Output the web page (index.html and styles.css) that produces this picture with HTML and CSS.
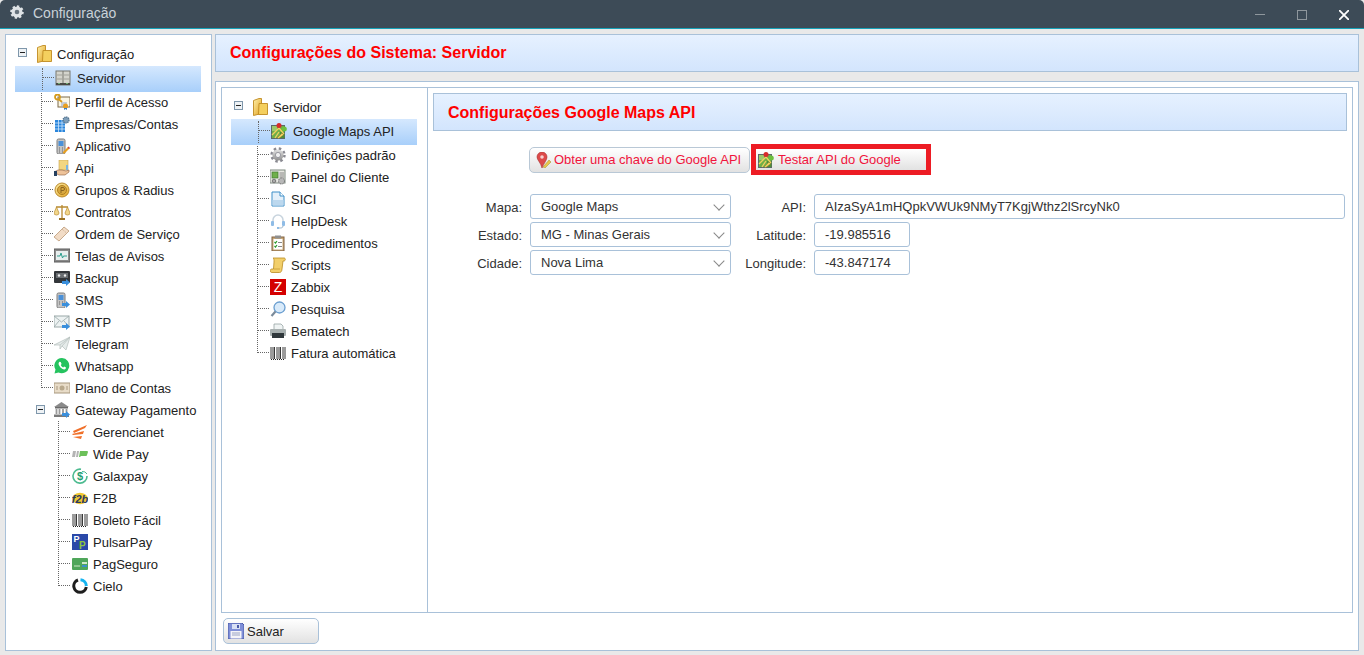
FILE: index.html
```html
<!DOCTYPE html>
<html lang="pt-BR">
<head>
  <meta charset="UTF-8" />
  <title>Configuração</title>
  <link rel="stylesheet" href="styles.css">
</head>
<body>
  <svg class="sprites" width="0" height="0" aria-hidden="true">
    <defs>
      <linearGradient id="g-gold" x1="0" y1="0" x2="1" y2="1"><stop offset="0" stop-color="#fff0a8"/><stop offset="1" stop-color="#e0a020"/></linearGradient>
      <linearGradient id="g-grey" x1="0" y1="0" x2="0" y2="1"><stop offset="0" stop-color="#e4e4e4"/><stop offset="1" stop-color="#8e8e8e"/></linearGradient>
      <symbol id="i-arrow" viewBox="0 0 16 16"><path d="M8 11h4V9l4 3.500-4 3.500v-2H8z" fill="#3a8fdc"/></symbol>
      <symbol id="i-folder" viewBox="0 0 15 18"><path d="M.5 2.500 6 .5h2.500v15l-8 2z" fill="url(#g-gold)" stroke="#c08a20" stroke-width=".9"/><path d="M6 5.500h8.500v11H5.500z" fill="#f4cf5e" stroke="#c08a20" stroke-width=".9"/></symbol>
      <symbol id="i-server" viewBox="0 0 16 16"><rect x="1" y="1" width="14" height="14" fill="#d4d4cc" stroke="#77776f"/><path d="M8 1v14" stroke="#77776f"/><path d="M2 5h5M9 5h5M2 9h5M9 9h5" stroke="#a0a098"/><path d="M1 14h14" stroke="#4a4a46" stroke-width="2"/><path d="M3 13.500h2M11 13.500h2" stroke="#6fb06f"/></symbol>
      <symbol id="i-cert" viewBox="0 0 16 16"><rect x="4" y="3" width="12" height="10" fill="#fbf6e4" stroke="#7c6a4a"/><path d="M7 9h6M7 11h4" stroke="#8ba2c8"/><circle cx="3.500" cy="3" r="2.500" fill="none" stroke="#d49a1c" stroke-width="1.800"/><path d="M4.500 5 8 8" stroke="#d49a1c" stroke-width="1.800"/><circle cx="11.500" cy="12" r="2.500" fill="#e8a020"/><path d="M10 14v2l1.500-1 1.500 1v-2" fill="#3b7fc4"/></symbol>
      <symbol id="i-building" viewBox="0 0 16 16"><rect x="1" y="4" width="10" height="12" fill="#2a86dc"/><path d="M1 7h10M1 10h10M1 13h10M4.500 4v12M8 4v12" stroke="#cfe6fb" stroke-width=".8"/><circle cx="12" cy="4" r="3" fill="#7f9fba" stroke="#50708c" stroke-width="1.300" stroke-dasharray="1.200 .8"/></symbol>
      <symbol id="i-phone" viewBox="0 0 16 16"><rect x="3" y="1" width="8" height="15" rx="1.500" fill="#c4c4c4" stroke="#7c7c7c"/><rect x="4.500" y="3" width="5" height="5" fill="#4a90d8"/><path d="M5 10h1M8 10h1M5 12h1M8 12h1M5 14h1M8 14h1" stroke="#666"/><path d="M9 14l5-5 1.500 1.500-5 5H9z" fill="#e8a020"/><path d="m13.500 9.500 1-1 1.500 1.500-1 1z" fill="#d43a3a"/></symbol>
      <symbol id="i-phone-send" viewBox="0 0 16 16"><rect x="3" y="1" width="8" height="15" rx="1.500" fill="#c4c4c4" stroke="#7c7c7c"/><rect x="4.500" y="3" width="5" height="5" fill="#4a90d8"/><path d="M5 10h1M8 10h1M5 12h1M8 12h1" stroke="#666"/><use href="#i-arrow" width="16" height="16"/></symbol>
      <symbol id="i-api" viewBox="0 0 16 16"><path d="M5 0h9v10H5z" fill="#f3d680" stroke="#c9a24a" stroke-width=".6"/><path d="M0 12l4-2h4l4 1 3-1v2l-4 3H5l-2-1H0z" fill="#eec39a" stroke="#8c5a3c" stroke-width=".6"/><path d="M0 11h3v5H0z" fill="#26405f"/><rect x="12" y="5" width="2" height="5" fill="#7ab4e0"/></symbol>
      <symbol id="i-coin" viewBox="0 0 16 16"><circle cx="8" cy="8" r="7" fill="url(#g-gold)" stroke="#b98a30"/><circle cx="8" cy="8" r="4.500" fill="#d8a840" stroke="#b07f20"/><path d="M7 11V5.500h2a1.500 1.500 0 0 1 0 3H7" fill="none" stroke="#8a6420"/></symbol>
      <symbol id="i-scales" viewBox="0 0 16 16"><path d="M8 1v13M2 3h12" stroke="#b88a30" stroke-width="1.300"/><path d="M5 15h6" stroke="#9b7224" stroke-width="2"/><path d="M0 9l2.500-6L5 9a2.500 2 0 0 1-5 0zM11 9l2.500-6L16 9a2.500 2 0 0 1-5 0z" fill="#f2d68a" stroke="#b88a30" stroke-width=".7"/></symbol>
      <symbol id="i-ticket" viewBox="0 0 16 16"><path d="M0 11 10 1l5 4L5 15z" fill="#f2dcc6" stroke="#c8aa8c"/><path d="m8 3 4.500 4" stroke="#c8aa8c" stroke-dasharray="1 1"/></symbol>
      <symbol id="i-monitor" viewBox="0 0 16 16"><rect x="0" y="1" width="16" height="13" fill="#8a8a8a" stroke="#5a5a5a"/><rect x="2" y="3" width="12" height="9" fill="#e8eeee"/><path d="M3 8h3l1-3 1.500 5 1-2H13" fill="none" stroke="#2f9f8f"/></symbol>
      <symbol id="i-backup" viewBox="0 0 16 16"><rect x="0" y="1" width="16" height="12" rx="1" fill="#33363a"/><rect x="2" y="3" width="12" height="5" fill="#6a6e72"/><circle cx="5" cy="5.500" r="1.200" fill="#eee"/><circle cx="11" cy="5.500" r="1.200" fill="#eee"/><use href="#i-arrow" width="16" height="16"/></symbol>
      <symbol id="i-mail" viewBox="0 0 16 16"><rect x="0" y="2" width="15" height="11" fill="#edf2f2" stroke="#9aa8a8"/><path d="m0 2 7.500 6L15 2M0 13l5-6M15 13l-5-6" fill="none" stroke="#9aa8a8" stroke-width=".8"/><use href="#i-arrow" width="16" height="16"/></symbol>
      <symbol id="i-plane" viewBox="0 0 16 16"><path d="M0 9 16 1l-4 13-4-4-2 3V9z" fill="#e6eceb" stroke="#b4bebc" stroke-width=".7"/><path d="M6 9 16 1 8 10" fill="none" stroke="#b4bebc" stroke-width=".7"/></symbol>
      <symbol id="i-whatsapp" viewBox="0 0 16 16"><path d="M8 0a7.600 7.600 0 0 0-6.500 11.600L.5 15.500l4-1A7.600 7.600 0 1 0 8 0z" fill="#25c35f"/><path d="M5.500 3.800c-1 .8-1.200 2-.5 3.500s2 3 3.600 3.800c1.400.6 2.600.4 3.200-.6l.2-1-1.900-1-.9.9c-1-.4-2-1.400-2.400-2.400l.8-.9-.9-2z" fill="#fff"/></symbol>
      <symbol id="i-money" viewBox="0 0 16 16"><rect x="0" y="3" width="16" height="10" fill="#e8dcc8" stroke="#a8987e"/><circle cx="8" cy="8" r="2.500" fill="#b8a88c"/><path d="M3 6v4M13 6v4" stroke="#a8987e"/></symbol>
      <symbol id="i-bank" viewBox="0 0 16 16"><path d="M0 5 7.500 0 15 5z" fill="#8a8a8a"/><path d="M1 5h13v1.500H1z" fill="#6a6a6a"/><path d="M2.500 7v5M5.500 7v5M9 7v5M12.500 7v5" stroke="#9a9a9a" stroke-width="1.800"/><path d="M0 12.500h15V15H0z" fill="#7a7a7a"/><use href="#i-arrow" width="16" height="16"/></symbol>
      <symbol id="i-gerencianet" viewBox="0 0 16 16"><path d="M1 7 15 1l-2 3L2 9zM0 10l12-3-1 3-10 1zM1 13l9-1-1 3z" fill="#f0702a"/></symbol>
      <symbol id="i-widepay" viewBox="0 0 16 16"><path d="M1 5h3L3 11H0zM5 5h2L6 11H4z" fill="#b4b4b4"/><path d="M8 5h7a1 1 0 0 1 1 1l-1 3a1 1 0 0 1-1 1H9l-1 1H7z" fill="#6cc05a"/></symbol>
      <symbol id="i-galaxpay" viewBox="0 0 16 16"><path d="M9 1.200A7 7 0 1 0 15 8" fill="none" stroke="#4dbb90" stroke-width="1.600"/><path d="M10 3.500A5 5 0 0 1 15 6" fill="none" stroke="#4dbb90"/><text x="8" y="12" text-anchor="middle" font-family="Liberation Sans" font-size="11" font-weight="700" fill="#1f9f70">$</text></symbol>
      <symbol id="i-f2b" viewBox="0 0 16 16"><ellipse cx="8" cy="8.500" rx="7.800" ry="5.800" fill="#f2c832"/><text x="8" y="13" text-anchor="middle" font-family="Liberation Sans" font-size="11" font-weight="700" font-style="italic" fill="#2c3a60">f2b</text></symbol>
      <symbol id="i-barcode" viewBox="0 0 16 16"><path d="M1 2v12M3 2v12M4.500 2v12M7 2v12M9 2v12M10.500 2v12M13 2v12M15 2v12" stroke="#222" stroke-width=".9"/><path d="M1 14.500h14" stroke="#222" stroke-dasharray="1 1"/></symbol>
      <symbol id="i-pulsar" viewBox="0 0 16 16"><rect width="16" height="16" fill="#2a48a8"/><text x="1.500" y="8" font-family="Liberation Sans" font-size="9" font-weight="700" fill="#fff">P</text><text x="7" y="15" font-family="Liberation Sans" font-size="10" font-weight="700" fill="#8cc63f">P</text></symbol>
      <symbol id="i-pagseguro" viewBox="0 0 16 16"><rect y="2" width="16" height="12" rx="1" fill="#4fa65a"/><path d="M10 6h5v2h-5z" fill="#cfe8c8"/><path d="M10 9h5v2h-5z" fill="#3b8fc8"/><path d="M2 10h6" stroke="#cfe8c8"/></symbol>
      <symbol id="i-cielo" viewBox="0 0 16 16"><path d="M8.500 1.700A6.300 6.300 0 0 1 14.300 8" fill="none" stroke="#14b4f0" stroke-width="3"/><path d="M14.300 9A6.300 6.300 0 1 1 6 2" fill="none" stroke="#1e1e1e" stroke-width="3"/></symbol>
      <symbol id="i-map" viewBox="0 0 16 16"><rect x="0.500" y="2.500" width="13" height="13" fill="#6fae48" stroke="#5a6a6a"/><path d="M1 3h5v5H1z" fill="#9cc86a"/><path d="M9 9h4.500v6H9z" fill="#4f8f3a"/><path d="M1 12 8 5l5 6M4 15l4-6" stroke="#f2d060" stroke-width="1.300" fill="none"/><circle cx="8" cy="2.600" r="2.500" fill="#d82a2a"/><circle cx="13.300" cy="6" r="2.500" fill="#6cc040"/><path d="M6 15l5-5 1.800 1.800-5 3.700z" fill="#f0d060" stroke="#806a20" stroke-width=".4"/></symbol>
      <symbol id="i-gear" viewBox="0 0 16 16"><circle cx="8" cy="8" r="6.300" fill="none" stroke="#8a8a92" stroke-width="2.800" stroke-dasharray="2.400 2.550"/><circle cx="8" cy="8" r="5.600" fill="url(#g-grey)"/><circle cx="8" cy="8" r="2.600" fill="#f0f0f0" stroke="#80808a" stroke-width=".7"/></symbol>
      <symbol id="i-panel" viewBox="0 0 16 16"><rect x="0" y="1" width="15" height="13" fill="#e8e8e2" stroke="#7f8a80"/><rect x="2" y="3" width="6" height="6" fill="#6fb04a" stroke="#3f7a30" stroke-width=".7"/><path d="M9.500 4H14M9.500 6H14M9.500 8H14" stroke="#888"/><circle cx="4" cy="12" r="1.800" fill="#aaa" stroke="#777"/><circle cx="11.500" cy="12" r="3" fill="#b8b8b8" stroke="#666" stroke-dasharray="1 .7"/></symbol>
      <symbol id="i-doc" viewBox="0 0 16 16"><path d="M2 1h8l4 4v10H2z" fill="#e4f0fa" stroke="#3f8fc8"/><path d="M10 1v4h4" fill="#fff" stroke="#3f8fc8"/><path d="M2.500 9h11v5.500h-11z" fill="#bcd8ee"/></symbol>
      <symbol id="i-headset" viewBox="0 0 16 16"><path d="M3 9V7a5 5 0 0 1 10 0v2" fill="none" stroke="#c8d4de" stroke-width="1.500"/><rect x="1" y="8" width="3" height="5" rx="1" fill="#8fbce6"/><rect x="12" y="8" width="3" height="5" rx="1" fill="#8fbce6"/><path d="M13 13c0 2-2 2-4 2" fill="none" stroke="#9ab4c8"/><circle cx="8" cy="15" r="1" fill="#6aa6dc"/></symbol>
      <symbol id="i-clip" viewBox="0 0 16 16"><rect x="2" y="2" width="12" height="14" fill="#c8a878" stroke="#806040"/><rect x="3.500" y="4" width="9" height="10.500" fill="#fff"/><rect x="5" y="0.500" width="6" height="3" fill="#909090"/><path d="M4.500 7l1 1 1.500-2M4.500 11l1 1 1.500-2" fill="none" stroke="#2a9a2a" stroke-width="1.200"/><path d="M8 7.500h4M8 11.500h4" stroke="#888"/></symbol>
      <symbol id="i-scroll" viewBox="0 0 16 16"><path d="M3 1h11c2 0 1.500 3 0 3h-1l-1 8c0 2-1 3.500-2.500 3.500H2c-2.500 0-2.500-3.500 0-3.500h1.500L4 5C4 3 4 1.500 3 1z" fill="#f2cf6a" stroke="#b98a20" stroke-width=".8"/><path d="M4 12h6" stroke="#b98a20" stroke-width=".6"/></symbol>
      <symbol id="i-zabbix" viewBox="0 0 16 16"><rect width="16" height="16" fill="#d40000"/><text x="8" y="13" text-anchor="middle" font-family="Liberation Sans" font-size="14" fill="#fff">Z</text></symbol>
      <symbol id="i-search" viewBox="0 0 16 16"><circle cx="9.500" cy="6.500" r="5.500" fill="#d8eafa" stroke="#6a9ed0" stroke-width="1.300"/><path d="M5.500 10.500 1.500 15" stroke="#7a8a9a" stroke-width="2.200"/></symbol>
      <symbol id="i-printer" viewBox="0 0 16 16"><path d="M4 1h7l2 2v4H4z" fill="#f0f4f4" stroke="#8a9a9a" stroke-width=".7"/><rect x="0" y="6" width="16" height="7" rx="1" fill="#a8b0b0"/><rect x="2" y="10" width="12" height="5" fill="#30383c"/></symbol>
      <symbol id="i-pin" viewBox="0 0 16 16"><path d="M6 0a5 5 0 0 1 5 5c0 3-3 6-5 11-1-5-5-8-5-11a5 5 0 0 1 5-5z" fill="#dd4a4a" stroke="#a83030" stroke-width=".6"/><circle cx="6" cy="5" r="1.800" fill="#f8d0d0"/><path d="m7 15 6-7 2 2-6 6z" fill="#e8c84a" stroke="#a08a30" stroke-width=".5"/></symbol>
      <symbol id="i-floppy" viewBox="0 0 16 16"><path d="M0 0h14l2 2v14H0z" fill="#7f8fd8" stroke="#4a5aa8"/><rect x="4" y="1" width="8" height="5" fill="#d8e0f4"/><rect x="9" y="2" width="2" height="3" fill="#4a5aa8"/><rect x="2.500" y="8" width="11" height="7.500" fill="#f4f4f8"/><path d="M4 10h8M4 12h8" stroke="#9aa4c4"/></symbol>
    </defs>
  </svg>

  <div class="window">
    <div class="titlebar">
      <svg class="title-icon" viewBox="0 0 16 16"><circle cx="8" cy="8" r="5.500" fill="#dfe3e6" stroke="#dfe3e6" stroke-width="2.600" stroke-dasharray="2.200 2"/><circle cx="8" cy="8" r="5" fill="#dfe3e6"/><circle cx="8" cy="8" r="2.300" fill="#66727c"/></svg>
      <span class="title-text">Configuração</span>
      <div class="win-controls">
        <span class="win-btn"><i class="win-min"></i></span>
        <span class="win-btn"><i class="win-max"></i></span>
        <span class="win-btn"><svg class="win-close" viewBox="0 0 10 10"><path d="m0 0 10 10M10 0 0 10" stroke="#fff" stroke-width="1.800"/></svg></span>
      </div>
    </div>

    <div class="workspace">
      <aside class="panel sidebar">
        <div class="tree">
          <div class="node root"><i class="exp"></i><svg class="ico folder"><use href="#i-folder"/></svg><span>Configuração</span></div>
          <div class="branch">
            <div class="node selected"><i class="elbow"></i><svg class="ico"><use href="#i-server"/></svg><span>Servidor</span></div>
            <div class="node"><i class="elbow"></i><svg class="ico"><use href="#i-cert"/></svg><span>Perfil de Acesso</span></div>
            <div class="node"><i class="elbow"></i><svg class="ico"><use href="#i-building"/></svg><span>Empresas/Contas</span></div>
            <div class="node"><i class="elbow"></i><svg class="ico"><use href="#i-phone"/></svg><span>Aplicativo</span></div>
            <div class="node"><i class="elbow"></i><svg class="ico"><use href="#i-api"/></svg><span>Api</span></div>
            <div class="node"><i class="elbow"></i><svg class="ico"><use href="#i-coin"/></svg><span>Grupos &amp; Radius</span></div>
            <div class="node"><i class="elbow"></i><svg class="ico"><use href="#i-scales"/></svg><span>Contratos</span></div>
            <div class="node"><i class="elbow"></i><svg class="ico"><use href="#i-ticket"/></svg><span>Ordem de Serviço</span></div>
            <div class="node"><i class="elbow"></i><svg class="ico"><use href="#i-monitor"/></svg><span>Telas de Avisos</span></div>
            <div class="node"><i class="elbow"></i><svg class="ico"><use href="#i-backup"/></svg><span>Backup</span></div>
            <div class="node"><i class="elbow"></i><svg class="ico"><use href="#i-phone-send"/></svg><span>SMS</span></div>
            <div class="node"><i class="elbow"></i><svg class="ico"><use href="#i-mail"/></svg><span>SMTP</span></div>
            <div class="node"><i class="elbow"></i><svg class="ico"><use href="#i-plane"/></svg><span>Telegram</span></div>
            <div class="node"><i class="elbow"></i><svg class="ico"><use href="#i-whatsapp"/></svg><span>Whatsapp</span></div>
            <div class="node"><i class="elbow"></i><svg class="ico"><use href="#i-money"/></svg><span>Plano de Contas</span></div>
          </div>
          <div class="node parent"><i class="exp"></i><svg class="ico"><use href="#i-bank"/></svg><span>Gateway Pagamento</span></div>
          <div class="branch sub">
            <div class="node"><i class="elbow"></i><svg class="ico"><use href="#i-gerencianet"/></svg><span>Gerencianet</span></div>
            <div class="node"><i class="elbow"></i><svg class="ico"><use href="#i-widepay"/></svg><span>Wide Pay</span></div>
            <div class="node"><i class="elbow"></i><svg class="ico"><use href="#i-galaxpay"/></svg><span>Galaxpay</span></div>
            <div class="node"><i class="elbow"></i><svg class="ico"><use href="#i-f2b"/></svg><span>F2B</span></div>
            <div class="node"><i class="elbow"></i><svg class="ico"><use href="#i-barcode"/></svg><span>Boleto Fácil</span></div>
            <div class="node"><i class="elbow"></i><svg class="ico"><use href="#i-pulsar"/></svg><span>PulsarPay</span></div>
            <div class="node"><i class="elbow"></i><svg class="ico"><use href="#i-pagseguro"/></svg><span>PagSeguro</span></div>
            <div class="node"><i class="elbow"></i><svg class="ico"><use href="#i-cielo"/></svg><span>Cielo</span></div>
          </div>
        </div>
      </aside>

      <main class="content">
        <header class="heading page-heading"><h1>Configurações do Sistema: Servidor</h1></header>

        <section class="panel main-panel">
          <div class="panel inner-panel">
            <nav class="subnav">
              <div class="tree">
                <div class="node root"><i class="exp"></i><svg class="ico folder"><use href="#i-folder"/></svg><span>Servidor</span></div>
                <div class="branch">
                  <div class="node selected"><i class="elbow"></i><svg class="ico"><use href="#i-map"/></svg><span>Google Maps API</span></div>
                  <div class="node"><i class="elbow"></i><svg class="ico"><use href="#i-gear"/></svg><span>Definições padrão</span></div>
                  <div class="node"><i class="elbow"></i><svg class="ico"><use href="#i-panel"/></svg><span>Painel do Cliente</span></div>
                  <div class="node"><i class="elbow"></i><svg class="ico"><use href="#i-doc"/></svg><span>SICI</span></div>
                  <div class="node"><i class="elbow"></i><svg class="ico"><use href="#i-headset"/></svg><span>HelpDesk</span></div>
                  <div class="node"><i class="elbow"></i><svg class="ico"><use href="#i-clip"/></svg><span>Procedimentos</span></div>
                  <div class="node"><i class="elbow"></i><svg class="ico"><use href="#i-scroll"/></svg><span>Scripts</span></div>
                  <div class="node"><i class="elbow"></i><svg class="ico"><use href="#i-zabbix"/></svg><span>Zabbix</span></div>
                  <div class="node"><i class="elbow"></i><svg class="ico"><use href="#i-search"/></svg><span>Pesquisa</span></div>
                  <div class="node"><i class="elbow"></i><svg class="ico"><use href="#i-printer"/></svg><span>Bematech</span></div>
                  <div class="node"><i class="elbow"></i><svg class="ico"><use href="#i-barcode"/></svg><span>Fatura automática</span></div>
                </div>
              </div>
            </nav>

            <div class="detail">
              <header class="heading detail-heading"><h2>Configurações Google Maps API</h2></header>

              <div class="actions">
                <button class="btn btn-key" type="button"><svg class="ico"><use href="#i-pin"/></svg>Obter uma chave do Google API</button>
                <button class="btn btn-test" type="button"><svg class="ico"><use href="#i-map"/></svg>Testar API do Google</button>
              </div>

              <form class="form-grid">
                <label>Mapa:</label>
                <div class="field select">Google Maps</div>
                <label>API:</label>
                <div class="field">AIzaSyA1mHQpkVWUk9NMyT7KgjWthz2lSrcyNk0</div>

                <label>Estado:</label>
                <div class="field select">MG - Minas Gerais</div>
                <label>Latitude:</label>
                <div class="field short">-19.985516</div>

                <label>Cidade:</label>
                <div class="field select">Nova Lima</div>
                <label>Longitude:</label>
                <div class="field short">-43.847174</div>
              </form>
            </div>
          </div>

          <footer class="main-footer">
            <button class="btn btn-save" type="button"><svg class="ico"><use href="#i-floppy"/></svg>Salvar</button>
          </footer>
        </section>
      </main>
    </div>
  </div>
</body>
</html>
```

FILE: styles.css
```css
* {
  box-sizing: border-box;
}
body {
  margin: 0;
  background-color: #e9e9e9;
  font-family: "Liberation Sans", Arial, sans-serif;
  font-size: 13px;
  color: #2a2a2a;
  overflow: hidden;
}
.sprites {
  position: absolute;
}
.window {
  height: 655px;
  display: flex;
  flex-direction: column;
}

/* title bar */
.titlebar {
  height: 29px;
  flex: none;
  display: flex;
  align-items: center;
  padding-left: 9px;
  background-color: #3d4b57;
  border-bottom: 1px solid #17a2b8;
  border-top-left-radius: 5px;
  border-top-right-radius: 5px;
}
.title-icon {
  width: 16px;
  height: 16px;
  margin-top: -4px;
}
.title-text {
  margin: -2px 0 0 8px;
  font-size: 14px;
  color: #c9d2d9;
}
.win-controls {
  margin: 1px -1px 0 auto;
  display: flex;
}
.win-btn {
  width: 42px;
  height: 27px;
  display: flex;
  align-items: center;
  justify-content: center;
}
.win-min {
  width: 10px;
  height: 1px;
  background-color: #8f979d;
}
.win-max {
  width: 10px;
  height: 10px;
  border: 1px solid #8f979d;
}
.win-close {
  width: 10px;
  height: 10px;
}

/* panels */
.workspace {
  flex: 1;
  display: flex;
  gap: 3px;
  padding: 5px 5px 4px;
  min-height: 0;
}
.panel {
  background-color: #fff;
  border: 1px solid #a9c1d9;
}
.sidebar {
  width: 207px;
  flex: none;
}
.content {
  flex: 1;
  display: flex;
  flex-direction: column;
  gap: 9px;
}
.heading {
  border: 1px solid #a9c1d9;
  background: linear-gradient(#e6f1ff, #d3e5fd);
  display: flex;
  align-items: center;
  color: #f00;
  font-weight: bold;
  font-size: 16px;
}
.heading h1,
.heading h2 {
  margin: 0;
  font-size: inherit;
}
.page-heading {
  height: 38px;
  padding-left: 14px;
}
.main-panel {
  flex: 1;
  display: flex;
  flex-direction: column;
  background-color: #fff;
  padding: 5px 5px 0;
  min-height: 0;
}
.inner-panel {
  flex: 1;
  display: flex;
}
.main-footer {
  height: 37px;
  flex: none;
  padding: 5px 0 0 2px;
}

/* trees */
.subnav {
  width: 206px;
  flex: none;
  border-right: 1px solid #a9c1d9;
}
.tree {
  padding: 8px 0 0 9px;
  width: 195px;
}
.node {
  height: 22px;
  display: flex;
  align-items: center;
  white-space: nowrap;
  color: #222;
}
.ico {
  width: 16px;
  height: 16px;
  flex: none;
}
.node .ico {
  margin-right: 5px;
}
.exp {
  position: relative;
  width: 9px;
  height: 9px;
  flex: none;
  border: 1px solid #7f97ab;
  background-color: #eef2f5;
}
.exp::after {
  content: "";
  position: absolute;
  left: 1px;
  right: 1px;
  top: 3px;
  height: 1px;
  background-color: #222;
}
.root {
  margin-bottom: 1px;
}
.root .exp {
  margin: -3px 0 0 3px;
}
.root .folder {
  width: 15px;
  height: 18px;
  margin-left: 10px;
}
.parent .exp {
  margin: -2px 9px 0 21px;
}
.branch {
  position: relative;
}
.branch::before {
  content: "";
  position: absolute;
  left: 26px;
  top: 8px;
  bottom: 11px;
  border-left: 1px dotted #666;
}
.elbow {
  width: 12px;
  height: 1px;
  flex: none;
  margin: -1px 1px 0 26px;
  border-top: 1px dotted #666;
}
.branch.sub::before {
  left: 43px;
  top: 0;
}
.sub .elbow {
  margin-left: 43px;
  margin-right: 2px;
}
.selected {
  position: relative;
  height: 26px;
  margin-bottom: -1px;
  padding-bottom: 2px;
  background: linear-gradient(#d5e8fe, #a8cffa);
}
.selected::before {
  content: "";
  position: absolute;
  left: 27px;
  top: 2px;
  bottom: 2px;
  border-left: 1px dotted #666;
}
.selected .elbow {
  margin-left: 27px;
  margin-right: 1px;
}
.selected .ico {
  margin-right: 6px;
}

/* detail side */
.detail {
  flex: 1;
  padding: 5px 5px 0;
}
.detail-heading {
  height: 38px;
  padding: 1px 0 0 14px;
}
.actions {
  margin: 13px 0 0 96px;
  display: flex;
  align-items: center;
  gap: 1px;
}
.btn {
  display: flex;
  align-items: center;
  height: 26px;
  padding: 0;
  border: 1px solid #b9c8d6;
  border-radius: 5px;
  background: linear-gradient(#ffffff, #e2e2e2);
  font-family: inherit;
  font-size: 13px;
  color: #222;
}
.btn-key {
  width: 221px;
  padding-left: 6px;
  color: #f0143c;
}
.btn-key .ico {
  margin-right: 2px;
}
.btn-test {
  width: 180px;
  height: 31px;
  padding-left: 2px;
  border: 5px solid #ed1c24;
  border-radius: 0;
  color: #f0143c;
}
.btn-test .ico {
  margin-right: 4px;
}
.btn-save {
  width: 96px;
  padding-left: 4px;
  border-color: #a9c1d9;
}
.btn-save .ico {
  margin-right: 3px;
}

/* form */
.form-grid {
  margin-top: 19px;
  display: grid;
  grid-template-columns: 89px 201px 67px 531px;
  column-gap: 8px;
  row-gap: 3px;
  align-items: center;
}
.form-grid label {
  text-align: right;
  color: #333;
  padding-top: 1px;
}
.field {
  height: 25px;
  display: flex;
  align-items: center;
  padding-left: 10px;
  border: 1px solid #a9c1d9;
  border-radius: 3px;
  background-color: #fff;
  color: #333;
}
.field.short {
  width: 96px;
}
.select {
  position: relative;
}
.select::after {
  content: "";
  position: absolute;
  right: 7px;
  top: 6px;
  width: 7px;
  height: 7px;
  border-right: 1.5px solid #888;
  border-bottom: 1.5px solid #888;
  transform: rotate(45deg);
}
```
